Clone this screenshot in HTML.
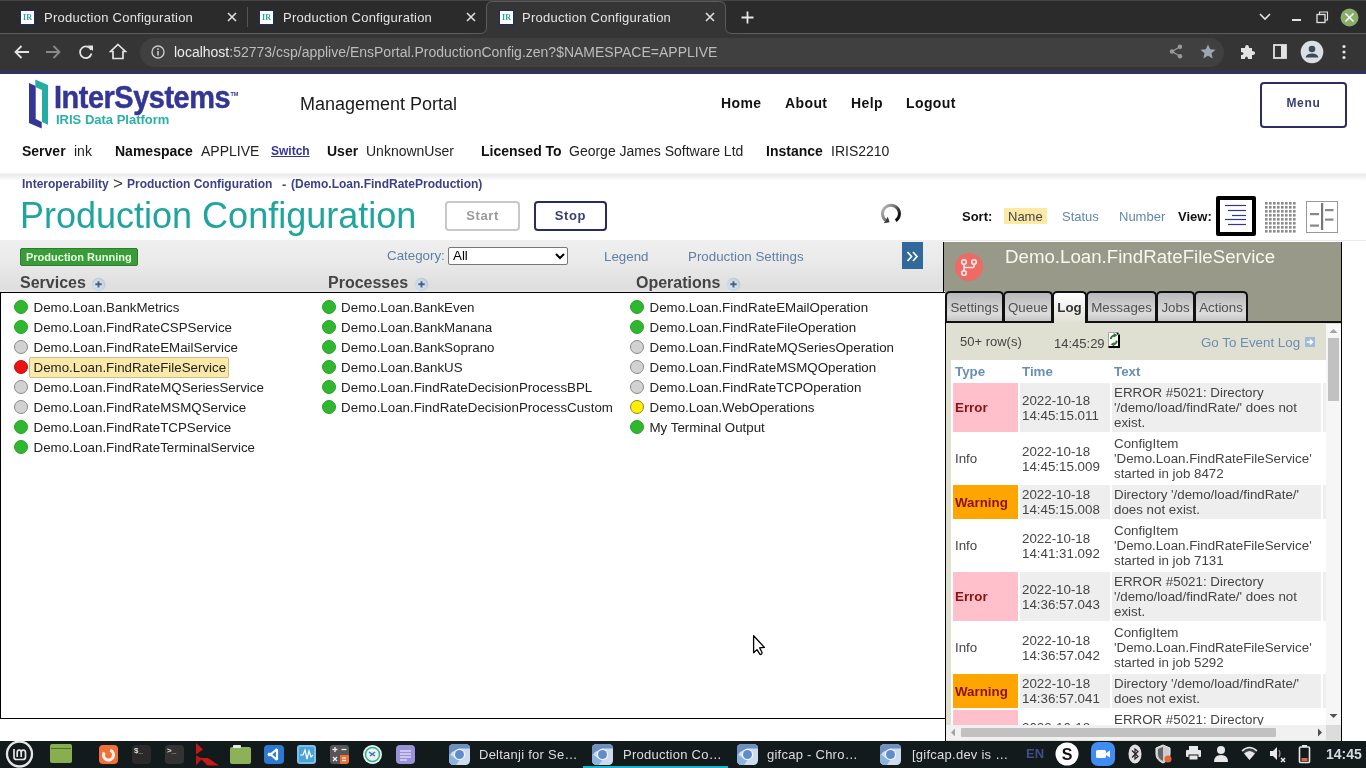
<!DOCTYPE html>
<html><head><meta charset="utf-8">
<style>
*{box-sizing:border-box}
html,body{margin:0;padding:0;width:1366px;height:768px;overflow:hidden;background:#fff;font-family:"Liberation Sans",sans-serif}
#root{position:absolute;left:0;top:0;width:1366px;height:768px;overflow:hidden;background:#fff;will-change:transform}
.a{position:absolute;white-space:nowrap}
/* chrome */
#tabstrip{position:absolute;left:0;top:0;width:1366px;height:34px;background:#2b2b2b;border-top:1px solid #454545}
#toolbar{position:absolute;left:0;top:34px;width:1366px;height:37px;background:#353535}
#tbline{position:absolute;left:0;top:33px;width:1366px;height:1px;background:#5e5e5e}
#activetab{position:absolute;left:486px;top:1px;width:240px;height:34px;background:#353535;border:1px solid #5a5a5a;border-bottom:none;border-radius:8px 8px 0 0}
.tabtxt{position:absolute;color:#e4e4e4;font-size:13px;top:10px;letter-spacing:0.25px}
.fav{position:absolute;top:10px;width:15px;height:15px;background:#fff;border:1px solid #1f2a6a;font-size:8px;font-weight:bold;color:#2aa59c;text-align:center;line-height:13px;font-family:"Liberation Serif",serif}
#omni{position:absolute;left:140px;top:38px;width:1084px;height:29px;border-radius:15px;background:#404040}
#blueline{position:absolute;left:0;top:71px;width:1366px;height:3px;background:#30306a}
/* header */
.nav{position:absolute;top:95px;font-size:14px;font-weight:bold;color:#111;letter-spacing:0.4px}
.ib{position:absolute;top:143px;font-size:14px;color:#222}
.ib b{color:#111}
#hdrshadow{position:absolute;left:0;top:173px;width:1366px;height:8px;background:linear-gradient(#f4f4f4,#ebebeb 25%,#fafafa 80%,#fff)}
.crumb{position:absolute;top:177px;font-size:12px;font-weight:bold;color:#3b4288}
/* band */
#band{position:absolute;left:0;top:240px;width:944px;height:53px;background:linear-gradient(#efefef,#eaeaea 40%,#dedede 92%,#ececec)}
.hd{position:absolute;top:274px;font-size:16px;font-weight:bold;color:#444}
.plus{position:absolute;top:277px;width:14px;height:14px;border-radius:50%;background:radial-gradient(circle at 40% 35%,#f4f8fb,#b9cad8);color:#3c6a9a;font-size:12px;font-weight:bold;line-height:14px;text-align:center}
.lnk{position:absolute;font-size:13.33px;color:#5f80a2}
#diagram{position:absolute;left:0;top:292px;width:946px;height:427px;border:1px solid #000;border-right:none;background:#fff}
.it{position:absolute;font-size:13.33px;color:#222;height:20px;line-height:20px}
.dot{position:absolute;width:14px;height:14px;border-radius:50%}
.g{background:#2fb82f;border:1px solid #27a027}
.gr{background:#d2d2d2;border:1px solid #8a8a8a}
.r{background:#ee1111;border:1px solid #c01010}
.y{background:#ffef00;border:1px solid #8a8a30}
/* panel */
#panel{position:absolute;left:944px;top:242px;width:398px;height:49px;background:#989988;border-right:1px solid #000}
#panel2{position:absolute;left:945px;top:291px;width:397px;height:31px;background:#989988;border-right:1px solid #000}
#bandedge{position:absolute;left:943px;top:242px;width:1px;height:51px;background:#000}
.tab{position:absolute;top:291px;height:30px;border:2px solid #111;border-bottom:none;border-radius:5px 5px 0 0;background:linear-gradient(#b9b9b9,#dcdcdc 75%,#c4c4c4);font-size:13.33px;color:#505050;text-align:center;line-height:29px}
#content{position:absolute;left:946px;top:322px;width:395px;height:419px;background:#e0e0d2;border-top:2px solid #111}
.lh{position:absolute;top:360px;font-size:13.33px;font-weight:bold;color:#6a9acb}
.cell{position:absolute;font-size:13px;line-height:15px;color:#444;padding:2px}
/* taskbar */
#taskbar{position:absolute;left:0;top:741px;width:1366px;height:27px;background:#131a1c}
.tk{position:absolute;top:744px;width:20px;height:20px;border-radius:4px}
.tt{position:absolute;top:747px;font-size:13px;color:#dedede;letter-spacing:0.25px}
</style></head><body><div id="root">

<!-- ============ CHROME ============ -->
<div id="tabstrip"></div>
<div id="tbline"></div>
<div id="toolbar"></div>
<svg class="a" style="left:0;top:0" width="1366" height="36"><path d="M470,33.5 H480 Q486.5,33.5 486.5,27 V7.5 Q486.5,1.5 492.5,1.5 H719.5 Q725.5,1.5 725.5,7.5 V27 Q725.5,33.5 732,33.5 H742 V36 H470 Z" fill="#353535"/><path d="M470,33.5 H480 Q486.5,33.5 486.5,27 V7.5 Q486.5,1.5 492.5,1.5 H719.5 Q725.5,1.5 725.5,7.5 V27 Q725.5,33.5 732,33.5 H742" fill="none" stroke="#5c5c5c" stroke-width="1"/><rect x="470" y="34" width="272" height="2" fill="#353535"/></svg>
<div class="fav" style="left:20px">IR</div>
<div class="tabtxt a" style="left:44px">Production Configuration</div>
<svg class="a" style="left:227px;top:12px" width="10" height="10"><path d="M1,1 L9,9 M9,1 L1,9" stroke="#e0e0e0" stroke-width="1.6"/></svg>
<div class="a" style="left:247px;top:7px;width:1px;height:20px;background:#555"></div>
<div class="fav" style="left:259px">IR</div>
<div class="tabtxt a" style="left:283px">Production Configuration</div>
<svg class="a" style="left:466px;top:12px" width="10" height="10"><path d="M1,1 L9,9 M9,1 L1,9" stroke="#e0e0e0" stroke-width="1.6"/></svg>
<div class="fav" style="left:499px">IR</div>
<div class="tabtxt a" style="left:522px">Production Configuration</div>
<svg class="a" style="left:705px;top:12px" width="10" height="10"><path d="M1,1 L9,9 M9,1 L1,9" stroke="#e0e0e0" stroke-width="1.6"/></svg>
<svg class="a" style="left:741px;top:11px" width="13" height="13"><path d="M6.5,0.5 V12.5 M0.5,6.5 H12.5" stroke="#e8e8e8" stroke-width="1.8"/></svg>

<div id="omni"></div>
<div class="a" style="left:174px;top:44px;font-size:14px;color:#bcbcbc"><span style="color:#ececec">localhost</span>:52773/csp/applive/EnsPortal.ProductionConfig.zen?$NAMESPACE=APPLIVE</div>
<div id="blueline"></div>
<!--CHROME-->
<svg class="a" style="left:13px;top:44px" width="17" height="16" viewBox="0 0 17 16"><path d="M16,8 H3 M8.5,2 L2.5,8 L8.5,14" fill="none" stroke="#e3e3e3" stroke-width="1.8"/></svg>
<svg class="a" style="left:45px;top:44px" width="17" height="16" viewBox="0 0 17 16"><path d="M1,8 H14 M8.5,2 L14.5,8 L8.5,14" fill="none" stroke="#8a8a8a" stroke-width="1.8"/></svg>
<svg class="a" style="left:78px;top:44px" width="16" height="16" viewBox="0 0 16 16"><path d="M13.2,6 A5.8,5.8 0 1 0 13.5,9.5" fill="none" stroke="#e3e3e3" stroke-width="1.8"/><polygon points="9.5,1.5 15,1.5 15,7" fill="#e3e3e3"/></svg>
<svg class="a" style="left:109px;top:43px" width="18" height="17" viewBox="0 0 18 17"><path d="M9,1.5 L16.5,8.5 H14 V15.5 H4 V8.5 H1.5 Z" fill="none" stroke="#e3e3e3" stroke-width="1.7" stroke-linejoin="miter"/></svg>
<svg class="a" style="left:151px;top:45px" width="14" height="14" viewBox="0 0 14 14"><circle cx="7" cy="7" r="6" fill="none" stroke="#c8c8c8" stroke-width="1.4"/><rect x="6.2" y="6" width="1.6" height="4.5" fill="#c8c8c8"/><rect x="6.2" y="3.3" width="1.6" height="1.6" fill="#c8c8c8"/></svg>
<svg class="a" style="left:1169px;top:44px" width="14" height="15" viewBox="0 0 14 15"><g fill="#9a9a9a"><circle cx="11" cy="2.8" r="2.2"/><circle cx="3" cy="7.5" r="2.2"/><circle cx="11" cy="12.2" r="2.2"/></g><path d="M11,2.8 L3,7.5 L11,12.2" fill="none" stroke="#9a9a9a" stroke-width="1.3"/></svg>
<svg class="a" style="left:1200px;top:44px" width="16" height="15" viewBox="0 0 16 15"><polygon points="8,0.5 10.2,5.3 15.5,5.7 11.5,9.2 12.7,14.5 8,11.7 3.3,14.5 4.5,9.2 0.5,5.7 5.8,5.3" fill="#9aa6b2"/></svg>
<svg class="a" style="left:1240px;top:44px" width="16" height="16" viewBox="0 0 16 16"><path d="M1,4 H5 Q5,1 7,1 Q9,1 9,4 H12 V7 Q15,7 15,9 Q15,11 12,11 V15 H8 Q8,12.5 6.5,12.5 Q5,12.5 5,15 H1 V11 Q3.5,11 3.5,9.5 Q3.5,8 1,8 Z" fill="#e3e3e3"/></svg>
<svg class="a" style="left:1273px;top:44px" width="14" height="15" viewBox="0 0 14 15"><rect x="1" y="1" width="12" height="13" fill="none" stroke="#e3e3e3" stroke-width="1.8"/><rect x="8" y="1" width="5" height="13" fill="#e3e3e3"/></svg>
<svg class="a" style="left:1300px;top:40px" width="24" height="24" viewBox="0 0 24 24"><circle cx="12" cy="12" r="11.3" fill="#d9dfe5"/><circle cx="12" cy="9" r="3.3" fill="#3c4a5a"/><path d="M5.5,17.5 Q6.5,13.5 12,13.5 Q17.5,13.5 18.5,17.5 Z" fill="#3c4a5a"/></svg>
<svg class="a" style="left:1341px;top:44px" width="6" height="16"><g fill="#e3e3e3"><circle cx="3" cy="2.5" r="1.6"/><circle cx="3" cy="8" r="1.6"/><circle cx="3" cy="13.5" r="1.6"/></g></svg>
<svg class="a" style="left:1258px;top:12px" width="14" height="10"><polyline points="2,2 7,7 12,2" fill="none" stroke="#e3e3e3" stroke-width="1.6"/></svg>
<div class="a" style="left:1292px;top:19px;width:9px;height:1.5px;background:#e3e3e3"></div>
<svg class="a" style="left:1316px;top:11px" width="13" height="13"><rect x="1" y="3.5" width="8" height="8" fill="none" stroke="#e3e3e3" stroke-width="1.3"/><path d="M3.5,3.5 V1 H11.5 V9 H9" fill="none" stroke="#e3e3e3" stroke-width="1.1"/></svg>
<svg class="a" style="left:1340px;top:8px" width="19" height="19"><circle cx="9.5" cy="9.5" r="9" fill="#8aad6a"/><path d="M5.5,5.5 L13.5,13.5 M13.5,5.5 L5.5,13.5" stroke="#fff" stroke-width="1.6"/></svg>
<!--/CHROME-->

<!-- ============ HEADER ============ -->
<!-- logo -->
<svg class="a" style="left:24px;top:76px" width="26" height="56" viewBox="0 0 26 56">
  <polygon points="5,7 11.7,10 11.7,43 17.7,46 17.7,52.5 5,47" fill="#333695"/>
  <polygon points="11.3,3.4 24,9 24,48.7 18,46 18,14 11.3,11" fill="#25ada4"/>
</svg>
<div class="a" style="left:54px;top:79px;font-size:31.5px;font-weight:bold;color:#333695;letter-spacing:-0.5px;transform:scaleX(0.918);transform-origin:0 0;-webkit-text-stroke:0.5px #333695">InterSystems</div>
<div class="a" style="left:230.5px;top:91px;font-size:5.5px;font-weight:bold;color:#333695">TM</div>
<div class="a" style="left:56px;top:112px;font-size:13px;font-weight:bold;color:#2ab0a6">IRIS Data Platform</div>

<div class="a" style="left:300px;top:94px;font-size:18px;color:#1a1a1a">Management Portal</div>
<div class="nav a" style="left:721px">Home</div>
<div class="nav a" style="left:785px">About</div>
<div class="nav a" style="left:851px">Help</div>
<div class="nav a" style="left:906px">Logout</div>
<div class="a" style="left:1260px;top:82px;width:87px;height:46px;border:2px solid #2a2e62;border-radius:4px;color:#3b4272;font-size:12px;font-weight:bold;text-align:center;line-height:38px;letter-spacing:0.7px">Menu</div>

<div class="ib a" style="left:22px"><b>Server</b></div>
<div class="ib a" style="left:74px">ink</div>
<div class="ib a" style="left:115px"><b>Namespace</b></div>
<div class="ib a" style="left:201px">APPLIVE</div>
<div class="a" style="left:271px;top:144px;font-size:12px;font-weight:bold;color:#333695;text-decoration:underline">Switch</div>
<div class="ib a" style="left:327px"><b>User</b></div>
<div class="ib a" style="left:366px">UnknownUser</div>
<div class="ib a" style="left:481px"><b>Licensed To</b></div>
<div class="ib a" style="left:569px">George James Software Ltd</div>
<div class="ib a" style="left:766px"><b>Instance</b></div>
<div class="ib a" style="left:831px">IRIS2210</div>

<div id="hdrshadow"></div>
<div class="crumb a" style="left:22px">Interoperability</div>
<div class="a" style="left:113px;top:174px;font-size:17px;color:#333">&gt;</div>
<div class="crumb a" style="left:127px">Production Configuration</div>
<div class="crumb a" style="left:282px;font-size:13px">-</div><div class="crumb a" style="left:291px">(Demo.Loan.FindRateProduction)</div>

<div class="a" style="left:20px;top:195px;font-size:36px;color:#1fa59e">Production Configuration</div>
<div class="a" style="left:445px;top:201px;width:75px;height:30px;border:2px solid #c8c8c8;border-radius:4px;color:#9a9a9a;font-size:13px;font-weight:bold;text-align:center;line-height:26px;letter-spacing:0.6px">Start</div>
<div class="a" style="left:534px;top:201px;width:73px;height:30px;border:2px solid #282c5e;border-radius:4px;color:#3b4070;font-size:13px;font-weight:bold;text-align:center;line-height:26px;letter-spacing:0.6px">Stop</div>

<!-- spinner -->
<svg class="a" style="left:876px;top:200px" width="30" height="28" viewBox="0 0 30 28">
  <defs><linearGradient id="sg" x1="0" y1="0" x2="1" y2="0.6"><stop offset="0" stop-color="#c4c4c4"/><stop offset="0.55" stop-color="#777"/><stop offset="1" stop-color="#0e0e0e"/></linearGradient></defs>
  <path d="M19.7,20.7 A8.5,8.5 0 1 0 9.6,20.3" fill="none" stroke="url(#sg)" stroke-width="3"/>
  <polygon points="7.8,23.3 11.8,16.8 13.6,22.3" fill="#3a3a3a"/>
</svg>
<div class="a" style="left:962px;top:209px;font-size:13px;font-weight:bold;color:#111">Sort:</div>
<div class="a" style="left:1004px;top:208px;width:43px;height:16px;background:#fde9a6"></div>
<div class="a" style="left:1008px;top:209px;font-size:13px;color:#444">Name</div>
<div class="a" style="left:1062px;top:209px;font-size:13px;color:#6288ad">Status</div>
<div class="a" style="left:1119px;top:209px;font-size:13px;color:#6288ad">Number</div>
<div class="a" style="left:1178px;top:209px;font-size:13px;font-weight:bold;color:#111">View:</div>
<!-- view icons -->
<div class="a" style="left:1216px;top:196px;width:40px;height:40px;border:4px solid #000;border-radius:2px;background:#fff"></div>
<svg class="a" style="left:1216px;top:196px" width="40" height="40">
  <g stroke="#333695" stroke-width="1.2">
  <line x1="9" y1="9.5" x2="30" y2="9.5"/><line x1="12" y1="14.5" x2="30" y2="14.5"/><line x1="16" y1="19.5" x2="30" y2="19.5"/><line x1="9" y1="23.5" x2="30" y2="23.5"/><line x1="12" y1="28.5" x2="30" y2="28.5"/>
  </g>
</svg>
<svg class="a" style="left:1265px;top:202px" width="31" height="31" id="dotgrid"><rect x="0.0" y="0.0" width="2.6" height="2.6" fill="#8a8a8a"/><rect x="4.0" y="0.0" width="2.6" height="2.6" fill="#8a8a8a"/><rect x="8.0" y="0.0" width="2.6" height="2.6" fill="#8a8a8a"/><rect x="12.0" y="0.0" width="2.6" height="2.6" fill="#8a8a8a"/><rect x="16.0" y="0.0" width="2.6" height="2.6" fill="#8a8a8a"/><rect x="20.0" y="0.0" width="2.6" height="2.6" fill="#8a8a8a"/><rect x="24.0" y="0.0" width="2.6" height="2.6" fill="#8a8a8a"/><rect x="28.0" y="0.0" width="2.6" height="2.6" fill="#8a8a8a"/><rect x="0.0" y="4.0" width="2.6" height="2.6" fill="#8a8a8a"/><rect x="4.0" y="4.0" width="2.6" height="2.6" fill="#8a8a8a"/><rect x="8.0" y="4.0" width="2.6" height="2.6" fill="#8a8a8a"/><rect x="12.0" y="4.0" width="2.6" height="2.6" fill="#8a8a8a"/><rect x="16.0" y="4.0" width="2.6" height="2.6" fill="#8a8a8a"/><rect x="20.0" y="4.0" width="2.6" height="2.6" fill="#8a8a8a"/><rect x="24.0" y="4.0" width="2.6" height="2.6" fill="#8a8a8a"/><rect x="28.0" y="4.0" width="2.6" height="2.6" fill="#8a8a8a"/><rect x="0.0" y="8.0" width="2.6" height="2.6" fill="#8a8a8a"/><rect x="4.0" y="8.0" width="2.6" height="2.6" fill="#8a8a8a"/><rect x="8.0" y="8.0" width="2.6" height="2.6" fill="#8a8a8a"/><rect x="12.0" y="8.0" width="2.6" height="2.6" fill="#8a8a8a"/><rect x="16.0" y="8.0" width="2.6" height="2.6" fill="#8a8a8a"/><rect x="20.0" y="8.0" width="2.6" height="2.6" fill="#8a8a8a"/><rect x="24.0" y="8.0" width="2.6" height="2.6" fill="#8a8a8a"/><rect x="28.0" y="8.0" width="2.6" height="2.6" fill="#8a8a8a"/><rect x="0.0" y="12.0" width="2.6" height="2.6" fill="#8a8a8a"/><rect x="4.0" y="12.0" width="2.6" height="2.6" fill="#8a8a8a"/><rect x="8.0" y="12.0" width="2.6" height="2.6" fill="#8a8a8a"/><rect x="12.0" y="12.0" width="2.6" height="2.6" fill="#8a8a8a"/><rect x="16.0" y="12.0" width="2.6" height="2.6" fill="#8a8a8a"/><rect x="20.0" y="12.0" width="2.6" height="2.6" fill="#8a8a8a"/><rect x="24.0" y="12.0" width="2.6" height="2.6" fill="#8a8a8a"/><rect x="28.0" y="12.0" width="2.6" height="2.6" fill="#8a8a8a"/><rect x="0.0" y="16.0" width="2.6" height="2.6" fill="#8a8a8a"/><rect x="4.0" y="16.0" width="2.6" height="2.6" fill="#8a8a8a"/><rect x="8.0" y="16.0" width="2.6" height="2.6" fill="#8a8a8a"/><rect x="12.0" y="16.0" width="2.6" height="2.6" fill="#8a8a8a"/><rect x="16.0" y="16.0" width="2.6" height="2.6" fill="#8a8a8a"/><rect x="20.0" y="16.0" width="2.6" height="2.6" fill="#8a8a8a"/><rect x="24.0" y="16.0" width="2.6" height="2.6" fill="#8a8a8a"/><rect x="28.0" y="16.0" width="2.6" height="2.6" fill="#8a8a8a"/><rect x="0.0" y="20.0" width="2.6" height="2.6" fill="#8a8a8a"/><rect x="4.0" y="20.0" width="2.6" height="2.6" fill="#8a8a8a"/><rect x="8.0" y="20.0" width="2.6" height="2.6" fill="#8a8a8a"/><rect x="12.0" y="20.0" width="2.6" height="2.6" fill="#8a8a8a"/><rect x="16.0" y="20.0" width="2.6" height="2.6" fill="#8a8a8a"/><rect x="20.0" y="20.0" width="2.6" height="2.6" fill="#8a8a8a"/><rect x="24.0" y="20.0" width="2.6" height="2.6" fill="#8a8a8a"/><rect x="28.0" y="20.0" width="2.6" height="2.6" fill="#8a8a8a"/><rect x="0.0" y="24.0" width="2.6" height="2.6" fill="#8a8a8a"/><rect x="4.0" y="24.0" width="2.6" height="2.6" fill="#8a8a8a"/><rect x="8.0" y="24.0" width="2.6" height="2.6" fill="#8a8a8a"/><rect x="12.0" y="24.0" width="2.6" height="2.6" fill="#8a8a8a"/><rect x="16.0" y="24.0" width="2.6" height="2.6" fill="#8a8a8a"/><rect x="20.0" y="24.0" width="2.6" height="2.6" fill="#8a8a8a"/><rect x="24.0" y="24.0" width="2.6" height="2.6" fill="#8a8a8a"/><rect x="28.0" y="24.0" width="2.6" height="2.6" fill="#8a8a8a"/><rect x="0.0" y="28.0" width="2.6" height="2.6" fill="#8a8a8a"/><rect x="4.0" y="28.0" width="2.6" height="2.6" fill="#8a8a8a"/><rect x="8.0" y="28.0" width="2.6" height="2.6" fill="#8a8a8a"/><rect x="12.0" y="28.0" width="2.6" height="2.6" fill="#8a8a8a"/><rect x="16.0" y="28.0" width="2.6" height="2.6" fill="#8a8a8a"/><rect x="20.0" y="28.0" width="2.6" height="2.6" fill="#8a8a8a"/><rect x="24.0" y="28.0" width="2.6" height="2.6" fill="#8a8a8a"/><rect x="28.0" y="28.0" width="2.6" height="2.6" fill="#8a8a8a"/></svg>
<div class="a" style="left:1306px;top:201px;width:32px;height:32px;border:1px solid #999;background:#fff"></div>
<svg class="a" style="left:1306px;top:201px" width="32" height="32">
  <rect x="15" y="2" width="2.2" height="27" fill="#777"/>
  <rect x="4" y="12" width="9" height="2.2" fill="#888"/><rect x="4" y="23.5" width="9" height="2.2" fill="#888"/>
  <rect x="19" y="8" width="8.5" height="2.2" fill="#888"/><rect x="19" y="17.5" width="8.5" height="2.2" fill="#888"/>
</svg>

<!-- ============ BAND ============ -->
<div class="a" style="left:0;top:240px;width:1366px;height:1px;background:#eaeaea"></div>
<div id="band"></div>
<div class="a" style="left:20px;top:248px;width:118px;height:18px;background:#3a9b3a;border:1px solid #2c7c2c;border-radius:2px;color:#e6ffdc;font-size:11px;font-weight:bold;line-height:16px;padding-left:5px">Production Running</div>
<div class="lnk a" style="left:387px;top:248px">Category:</div>
<div class="a" style="left:448px;top:247px;width:120px;height:18px;background:#fff;border:1px solid #777;border-radius:2px;font-size:13.33px;color:#000;line-height:16px;padding-left:4px">All</div>
<svg class="a" style="left:554px;top:251px" width="12" height="10"><polyline points="2,3 6,7 10,3" fill="none" stroke="#000" stroke-width="2"/></svg>
<div class="lnk a" style="left:604px;top:249px">Legend</div>
<div class="lnk a" style="left:688px;top:249px">Production Settings</div>
<div class="a" style="left:902px;top:242px;width:21px;height:27px;background:#30699a"></div>
<svg class="a" style="left:902px;top:242px" width="21" height="27"><g fill="none" stroke="#fff" stroke-width="1.7"><polyline points="5.5,10 9.5,14.5 5.5,19"/><polyline points="11,10 15,14.5 11,19"/></g></svg>

<div class="hd a" style="left:20px">Services</div>
<svg class="a" style="left:91px;top:277px" width="15" height="15" viewBox="0 0 15 15"><defs><radialGradient id="pg92" cx="0.45" cy="0.55" r="0.6"><stop offset="0" stop-color="#ddeaf4"/><stop offset="0.7" stop-color="#c9d7e2"/><stop offset="1" stop-color="#aebdca"/></radialGradient></defs><circle cx="7.5" cy="7.5" r="6.8" fill="url(#pg92)"/><path d="M4.3,7.3 H10.7 M7.5,4.2 V10.4" stroke="#4a6280" stroke-width="1.9"/></svg>
<div class="hd a" style="left:328px">Processes</div>
<svg class="a" style="left:414px;top:277px" width="15" height="15" viewBox="0 0 15 15"><defs><radialGradient id="pg414" cx="0.45" cy="0.55" r="0.6"><stop offset="0" stop-color="#ddeaf4"/><stop offset="0.7" stop-color="#c9d7e2"/><stop offset="1" stop-color="#aebdca"/></radialGradient></defs><circle cx="7.5" cy="7.5" r="6.8" fill="url(#pg414)"/><path d="M4.3,7.3 H10.7 M7.5,4.2 V10.4" stroke="#4a6280" stroke-width="1.9"/></svg>
<div class="hd a" style="left:636px">Operations</div>
<svg class="a" style="left:726px;top:277px" width="15" height="15" viewBox="0 0 15 15"><defs><radialGradient id="pg726" cx="0.45" cy="0.55" r="0.6"><stop offset="0" stop-color="#ddeaf4"/><stop offset="0.7" stop-color="#c9d7e2"/><stop offset="1" stop-color="#aebdca"/></radialGradient></defs><circle cx="7.5" cy="7.5" r="6.8" fill="url(#pg726)"/><path d="M4.3,7.3 H10.7 M7.5,4.2 V10.4" stroke="#4a6280" stroke-width="1.9"/></svg>

<!-- ============ DIAGRAM ============ -->
<div id="diagram"></div>
<!--ITEMS-->
<div class="dot g" style="left:14px;top:300px"></div><div class="it a" style="left:33.5px;top:298px">Demo.Loan.BankMetrics</div>
<div class="dot g" style="left:14px;top:320px"></div><div class="it a" style="left:33.5px;top:318px">Demo.Loan.FindRateCSPService</div>
<div class="dot gr" style="left:14px;top:340px"></div><div class="it a" style="left:33.5px;top:338px">Demo.Loan.FindRateEMailService</div>
<div class="a" style="left:29px;top:357px;width:200px;height:21px;background:#fbe9a8;border:1px solid #c9bc92;border-radius:2px"></div>
<div class="dot r" style="left:14px;top:360px"></div><div class="it a" style="left:33.5px;top:358px">Demo.Loan.FindRateFileService</div>
<div class="dot gr" style="left:14px;top:380px"></div><div class="it a" style="left:33.5px;top:378px">Demo.Loan.FindRateMQSeriesService</div>
<div class="dot gr" style="left:14px;top:400px"></div><div class="it a" style="left:33.5px;top:398px">Demo.Loan.FindRateMSMQService</div>
<div class="dot g" style="left:14px;top:420px"></div><div class="it a" style="left:33.5px;top:418px">Demo.Loan.FindRateTCPService</div>
<div class="dot g" style="left:14px;top:440px"></div><div class="it a" style="left:33.5px;top:438px">Demo.Loan.FindRateTerminalService</div>
<div class="dot g" style="left:321.8px;top:300px"></div><div class="it a" style="left:341.1px;top:298px">Demo.Loan.BankEven</div>
<div class="dot g" style="left:321.8px;top:320px"></div><div class="it a" style="left:341.1px;top:318px">Demo.Loan.BankManana</div>
<div class="dot g" style="left:321.8px;top:340px"></div><div class="it a" style="left:341.1px;top:338px">Demo.Loan.BankSoprano</div>
<div class="dot g" style="left:321.8px;top:360px"></div><div class="it a" style="left:341.1px;top:358px">Demo.Loan.BankUS</div>
<div class="dot g" style="left:321.8px;top:380px"></div><div class="it a" style="left:341.1px;top:378px">Demo.Loan.FindRateDecisionProcessBPL</div>
<div class="dot g" style="left:321.8px;top:400px"></div><div class="it a" style="left:341.1px;top:398px">Demo.Loan.FindRateDecisionProcessCustom</div>
<div class="dot g" style="left:630px;top:300px"></div><div class="it a" style="left:649.5px;top:298px">Demo.Loan.FindRateEMailOperation</div>
<div class="dot g" style="left:630px;top:320px"></div><div class="it a" style="left:649.5px;top:318px">Demo.Loan.FindRateFileOperation</div>
<div class="dot gr" style="left:630px;top:340px"></div><div class="it a" style="left:649.5px;top:338px">Demo.Loan.FindRateMQSeriesOperation</div>
<div class="dot gr" style="left:630px;top:360px"></div><div class="it a" style="left:649.5px;top:358px">Demo.Loan.FindRateMSMQOperation</div>
<div class="dot gr" style="left:630px;top:380px"></div><div class="it a" style="left:649.5px;top:378px">Demo.Loan.FindRateTCPOperation</div>
<div class="dot y" style="left:630px;top:400px"></div><div class="it a" style="left:649.5px;top:398px">Demo.Loan.WebOperations</div>
<div class="dot g" style="left:630px;top:420px"></div><div class="it a" style="left:649.5px;top:418px">My Terminal Output</div>
<!--/ITEMS-->

<!-- cursor -->
<svg class="a" style="left:750px;top:632px;z-index:50" width="18" height="25" viewBox="0 0 18 25"><path d="M3.6,3.8 L3.6,20.8 L7,17.6 L9.8,22.2 Q10.8,23 11.8,21.6 Q12.2,20.8 11.8,20 L9.6,15.8 L14.4,15.4 Z" fill="#fff" stroke="#000" stroke-width="1.3" stroke-linejoin="round"/></svg>
<!-- ============ PANEL ============ -->
<div id="panel"></div><div id="panel2"></div><div id="bandedge"></div>
<!--PANEL-->
<div class="a" style="left:955px;top:253px;width:28px;height:28px;border-radius:50%;background:#ee6a64"></div>
<svg class="a" style="left:955px;top:253px" width="28" height="28" viewBox="0 0 28 28"><g fill="none" stroke="#fde8e8" stroke-width="1.6"><circle cx="9" cy="9" r="2.3"/><circle cx="19" cy="9" r="2.3"/><circle cx="9" cy="20" r="2.3"/><line x1="9" y1="11.3" x2="9" y2="17.7"/><path d="M19,11.3 V13.5 Q19,14.5 18,14.5 H9"/></g></svg>
<div class="a" style="left:1005px;top:246px;font-size:18.7px;color:#f8f8ee">Demo.Loan.FindRateFileService</div>
<div class="a" style="left:945px;top:321px;width:397px;height:420px;background:#e0e0d2;border-top:2px solid #111;border-left:1px solid #000;border-right:1px solid #000"></div>
<div class="tab a" style="left:945px;width:59px">Settings</div>
<div class="tab a" style="left:1003px;width:50px">Queue</div>
<div class="tab a" style="left:1052px;width:35px;height:32px;background:linear-gradient(#fdfdfd,#eeeee8 60%,#e0e0d2);font-weight:bold;color:#333;z-index:2">Log</div>
<div class="tab a" style="left:1086px;width:71px">Messages</div>
<div class="tab a" style="left:1156px;width:39px">Jobs</div>
<div class="tab a" style="left:1194px;width:54px">Actions</div>
<div class="a" style="left:960px;top:334px;font-size:13px;color:#444">50+ row(s)</div>
<div class="a" style="left:1054px;top:336px;font-size:13px;color:#444">14:45:29</div>
<svg class="a" style="left:1108px;top:332px" width="13" height="16" viewBox="0 0 13 16"><rect x="1" y="1" width="10" height="14" fill="#fff"/><path d="M0.5,15.5 V0.5 H9" fill="none" stroke="#a8a8a8" stroke-width="1"/><path d="M11,2.5 V15 H0.5" fill="none" stroke="#000" stroke-width="2"/><circle cx="9.6" cy="1.6" r="1.1" fill="#000"/><path d="M2.8,7 Q3,4 6.5,3.4" fill="none" stroke="#2d7a2d" stroke-width="1.8"/><polygon points="5.6,1 9.4,3.3 5.9,5.6" fill="#2d7a2d"/><path d="M8.8,8.6 Q8.6,11.6 5.4,12.3" fill="none" stroke="#2d7a2d" stroke-width="1.8"/><polygon points="6.4,10 2.6,12.2 6.2,14.6" fill="#2d7a2d"/></svg>
<div class="a" style="left:1201px;top:335px;font-size:13.33px;color:#6a8db2">Go To Event Log</div>
<svg class="a" style="left:1305px;top:337px" width="10" height="10" viewBox="0 0 10 10"><rect x="0" y="0" width="10" height="10" fill="#9dbcda"/><path d="M1.8,5 H6.8 M5,2.6 L7.4,5 L5,7.4" fill="none" stroke="#fff" stroke-width="1.5"/></svg>
<div class="a" style="left:951px;top:360px;width:375px;height:365px;background:#fff;overflow:hidden" id="tbl">
<div class="a" style="left:4px;top:4px;font-size:13.33px;font-weight:bold;color:#6a8fb4">Type</div>
<div class="a" style="left:71px;top:4px;font-size:13.33px;font-weight:bold;color:#6a8fb4">Time</div>
<div class="a" style="left:163px;top:4px;font-size:13.33px;font-weight:bold;color:#6a8fb4">Text</div>
<div class="a" style="left:2px;top:23.3px;width:65px;height:49px;background:#ffc0cb"><div class="a" style="left:2px;top:17.0px;font-size:13.33px;line-height:15px;font-weight:bold;color:#8b1010">Error</div></div>
<div class="a" style="left:69px;top:23.3px;width:90px;height:49px;background:#eeeeee"><div class="a" style="left:2px;top:9.5px;font-size:13.33px;line-height:15px;color:#444">2022-10-18<br>14:45:15.011</div></div>
<div class="a" style="left:161px;top:23.3px;width:209px;height:49px;background:#eeeeee"><div class="a" style="left:2px;top:2px;font-size:13.33px;line-height:15px;color:#444">ERROR #5021: Directory<br>'/demo/load/findRate/' does not<br>exist.</div></div>
<div class="a" style="left:372px;top:23.3px;width:4px;height:49px;background:#eeeeee"></div>
<div class="a" style="left:2px;top:74.3px;width:65px;height:49px;background:#fff"><div class="a" style="left:2px;top:17.0px;font-size:13.33px;line-height:15px;font-weight:normal;color:#444">Info</div></div>
<div class="a" style="left:69px;top:74.3px;width:90px;height:49px;background:#fff"><div class="a" style="left:2px;top:9.5px;font-size:13.33px;line-height:15px;color:#444">2022-10-18<br>14:45:15.009</div></div>
<div class="a" style="left:161px;top:74.3px;width:209px;height:49px;background:#fff"><div class="a" style="left:2px;top:2px;font-size:13.33px;line-height:15px;color:#444">ConfigItem<br>'Demo.Loan.FindRateFileService'<br>started in job 8472</div></div>
<div class="a" style="left:372px;top:74.3px;width:4px;height:49px;background:#fff"></div>
<div class="a" style="left:2px;top:125.3px;width:65px;height:34px;background:#ffa500"><div class="a" style="left:2px;top:9.5px;font-size:13.33px;line-height:15px;font-weight:bold;color:#8b1010">Warning</div></div>
<div class="a" style="left:69px;top:125.3px;width:90px;height:34px;background:#eeeeee"><div class="a" style="left:2px;top:2.0px;font-size:13.33px;line-height:15px;color:#444">2022-10-18<br>14:45:15.008</div></div>
<div class="a" style="left:161px;top:125.3px;width:209px;height:34px;background:#eeeeee"><div class="a" style="left:2px;top:2px;font-size:13.33px;line-height:15px;color:#444">Directory '/demo/load/findRate/'<br>does not exist.</div></div>
<div class="a" style="left:372px;top:125.3px;width:4px;height:34px;background:#eeeeee"></div>
<div class="a" style="left:2px;top:161.3px;width:65px;height:49px;background:#fff"><div class="a" style="left:2px;top:17.0px;font-size:13.33px;line-height:15px;font-weight:normal;color:#444">Info</div></div>
<div class="a" style="left:69px;top:161.3px;width:90px;height:49px;background:#fff"><div class="a" style="left:2px;top:9.5px;font-size:13.33px;line-height:15px;color:#444">2022-10-18<br>14:41:31.092</div></div>
<div class="a" style="left:161px;top:161.3px;width:209px;height:49px;background:#fff"><div class="a" style="left:2px;top:2px;font-size:13.33px;line-height:15px;color:#444">ConfigItem<br>'Demo.Loan.FindRateFileService'<br>started in job 7131</div></div>
<div class="a" style="left:372px;top:161.3px;width:4px;height:49px;background:#fff"></div>
<div class="a" style="left:2px;top:212.3px;width:65px;height:49px;background:#ffc0cb"><div class="a" style="left:2px;top:17.0px;font-size:13.33px;line-height:15px;font-weight:bold;color:#8b1010">Error</div></div>
<div class="a" style="left:69px;top:212.3px;width:90px;height:49px;background:#eeeeee"><div class="a" style="left:2px;top:9.5px;font-size:13.33px;line-height:15px;color:#444">2022-10-18<br>14:36:57.043</div></div>
<div class="a" style="left:161px;top:212.3px;width:209px;height:49px;background:#eeeeee"><div class="a" style="left:2px;top:2px;font-size:13.33px;line-height:15px;color:#444">ERROR #5021: Directory<br>'/demo/load/findRate/' does not<br>exist.</div></div>
<div class="a" style="left:372px;top:212.3px;width:4px;height:49px;background:#eeeeee"></div>
<div class="a" style="left:2px;top:263.3px;width:65px;height:49px;background:#fff"><div class="a" style="left:2px;top:17.0px;font-size:13.33px;line-height:15px;font-weight:normal;color:#444">Info</div></div>
<div class="a" style="left:69px;top:263.3px;width:90px;height:49px;background:#fff"><div class="a" style="left:2px;top:9.5px;font-size:13.33px;line-height:15px;color:#444">2022-10-18<br>14:36:57.042</div></div>
<div class="a" style="left:161px;top:263.3px;width:209px;height:49px;background:#fff"><div class="a" style="left:2px;top:2px;font-size:13.33px;line-height:15px;color:#444">ConfigItem<br>'Demo.Loan.FindRateFileService'<br>started in job 5292</div></div>
<div class="a" style="left:372px;top:263.3px;width:4px;height:49px;background:#fff"></div>
<div class="a" style="left:2px;top:314.3px;width:65px;height:34px;background:#ffa500"><div class="a" style="left:2px;top:9.5px;font-size:13.33px;line-height:15px;font-weight:bold;color:#8b1010">Warning</div></div>
<div class="a" style="left:69px;top:314.3px;width:90px;height:34px;background:#eeeeee"><div class="a" style="left:2px;top:2.0px;font-size:13.33px;line-height:15px;color:#444">2022-10-18<br>14:36:57.041</div></div>
<div class="a" style="left:161px;top:314.3px;width:209px;height:34px;background:#eeeeee"><div class="a" style="left:2px;top:2px;font-size:13.33px;line-height:15px;color:#444">Directory '/demo/load/findRate/'<br>does not exist.</div></div>
<div class="a" style="left:372px;top:314.3px;width:4px;height:34px;background:#eeeeee"></div>
<div class="a" style="left:2px;top:350.3px;width:65px;height:49px;background:#ffc0cb"><div class="a" style="left:2px;top:17.0px;font-size:13.33px;line-height:15px;font-weight:bold;color:#8b1010">Error</div></div>
<div class="a" style="left:69px;top:350.3px;width:90px;height:49px;background:#fff"><div class="a" style="left:2px;top:9.5px;font-size:13.33px;line-height:15px;color:#444">2022-10-18<br>14:36:57.040</div></div>
<div class="a" style="left:161px;top:350.3px;width:209px;height:49px;background:#fff"><div class="a" style="left:2px;top:2px;font-size:13.33px;line-height:15px;color:#444">ERROR #5021: Directory<br>'/demo/load/findRate/' does not<br>exist.</div></div>
<div class="a" style="left:372px;top:350.3px;width:4px;height:49px;background:#fff"></div>
</div>
<div class="a" style="left:1326px;top:324px;width:15px;height:401px;background:#f6f6f6"></div>
<div class="a" style="left:1328px;top:338px;width:11px;height:63px;background:#c1c1c1"></div>
<svg class="a" style="left:1328px;top:326px" width="11" height="10"><polygon points="1.5,7 5.5,3 9.5,7" fill="#a3a3a3"/></svg>
<svg class="a" style="left:1328px;top:711px" width="11" height="10"><polygon points="1.5,3 5.5,7 9.5,3" fill="#505050"/></svg>
<div class="a" style="left:946px;top:725px;width:380px;height:15px;background:#f1f1f1"></div>
<div class="a" style="left:961px;top:728px;width:315px;height:9px;background:#c1c1c1;border-radius:1px"></div>
<svg class="a" style="left:948px;top:727px" width="10" height="11"><polygon points="7,1.5 3,5.5 7,9.5" fill="#a3a3a3"/></svg>
<svg class="a" style="left:1315px;top:727px" width="10" height="11"><polygon points="3,1.5 7,5.5 3,9.5" fill="#505050"/></svg>
<div class="a" style="left:1326px;top:725px;width:15px;height:15px;background:#dcdcdc"></div>
<!--/PANEL-->

<!-- ============ TASKBAR ============ -->
<div id="taskbar"></div>
<!--TASK-->
<svg class="a" style="left:5px;top:741px" width="29" height="27" viewBox="0 0 29 27"><circle cx="14.5" cy="13" r="12.5" fill="none" stroke="#e6e6e6" stroke-width="2.3"/><path d="M9,8 V16 Q9,18.5 11.5,18.5 H18 Q20.5,18.5 20.5,16 V11.5 Q20.5,9 18.3,9 Q16.2,9 16.2,11.5 V16 M16.2,11.5 Q16.2,9 14.1,9 Q12.2,9 12.2,11.5 V16" fill="none" stroke="#e6e6e6" stroke-width="1.7"/></svg>
<div class="a" style="left:50px;top:744px;width:22px;height:19px;background:#88ae50;border-radius:2px"></div>
<div class="a" style="left:51px;top:747.5px;width:20px;height:1.5px;background:#4f6f2c"></div>
<div class="a" style="left:99px;top:745px;width:19px;height:19px;border-radius:4px;background:#ef7137"></div>
<svg class="a" style="left:99px;top:745px" width="19" height="19"><circle cx="9.5" cy="10" r="5" fill="none" stroke="#fbefe6" stroke-width="3.2" stroke-dasharray="24 8" transform="rotate(-70 9.5 10)"/><circle cx="10.2" cy="9.6" r="1.6" fill="#ef7137"/></svg>
<div class="a" style="left:132px;top:745px;width:19px;height:19px;border-radius:4px;background:#2a2a2a;color:#ddd;font-size:8px;font-weight:bold;padding:1px 2px;line-height:9px">$_</div>
<div class="a" style="left:165px;top:745px;width:19px;height:19px;border-radius:4px;background:#333;color:#ddd;font-size:8px;font-weight:bold;padding:1px 2px;line-height:9px">&gt;_</div>
<svg class="a" style="left:195px;top:742px" width="25" height="25" viewBox="0 0 25 25"><polygon points="1,1 8,7.5 1,12.5" fill="#c41a1a"/><polygon points="1,13.5 7.5,16.5 1,23.5" fill="#b81616"/><polygon points="5,16 13,16 24,23.5 12.5,23.5" fill="#c41a1a"/></svg>
<div class="a" style="left:230px;top:747px;width:21px;height:17px;border-radius:2px;background:#8cb159"></div><div class="a" style="left:233px;top:745px;width:8px;height:3px;border-radius:1px;background:#e8e8e8"></div>
<div class="a" style="left:264px;top:745px;width:20px;height:19px;border-radius:4px;background:#2b79d0"></div>
<svg class="a" style="left:264px;top:745px" width="20" height="19"><path d="M13,4 L13,15 M13,4 L6,10 L4,8.5 M13,15 L6,9 L4,10.5" fill="none" stroke="#fff" stroke-width="2.2"/></svg>
<div class="a" style="left:297px;top:745px;width:19px;height:19px;border-radius:3px;background:#4aa3d8;border:2px solid #7cc0ea"></div>
<svg class="a" style="left:297px;top:745px" width="19" height="19"><polyline points="3,10 6,10 8,5 10,14 12,6 14,12 16,10" fill="none" stroke="#fff" stroke-width="1.2"/></svg>
<div class="a" style="left:330px;top:745px;width:19px;height:19px;border-radius:3px;background:#555"></div><div class="a" style="left:340px;top:755px;width:9px;height:9px;background:#ef6e35;border-radius:0 0 3px 0"></div>
<svg class="a" style="left:330px;top:745px" width="19" height="19"><g stroke="#eee" stroke-width="1.3"><line x1="2.5" y1="4.5" x2="7.5" y2="4.5"/><line x1="5" y1="2" x2="5" y2="7"/><line x1="11.5" y1="4.5" x2="16.5" y2="4.5"/><line x1="3" y1="12" x2="7" y2="16"/><line x1="7" y1="12" x2="3" y2="16"/><line x1="12" y1="13" x2="16" y2="13"/><line x1="12" y1="15.5" x2="16" y2="15.5"/></g></svg>
<svg class="a" style="left:362px;top:744px" width="21" height="21"><circle cx="10.5" cy="10.5" r="9.5" fill="#f0f0f0"/><circle cx="10.5" cy="10.5" r="7" fill="none" stroke="#28b48c" stroke-width="1.5"/><path d="M7,8 L13,12 M13,8 L8,12" stroke="#2a7ac0" stroke-width="1.5"/></svg>
<div class="a" style="left:396px;top:745px;width:19px;height:19px;border-radius:4px;background:#9a92d8"></div>
<svg class="a" style="left:396px;top:745px" width="19" height="19"><g stroke="#e8e6f8" stroke-width="1.3"><line x1="4" y1="6" x2="15" y2="6"/><line x1="4" y1="9" x2="15" y2="9"/><line x1="4" y1="12" x2="15" y2="12"/><line x1="4" y1="15" x2="11" y2="15"/></g></svg>
<svg class="a" style="left:449px;top:744px" width="21" height="21"><defs><clipPath id="cc449"><rect x="0" y="0" width="21" height="21" rx="4.5"/></clipPath></defs><g clip-path="url(#cc449)"><rect x="0" y="0" width="21" height="21" fill="#cddbec"/><polygon points="0,0 21,0 21,4.5 10.5,4.5 3,8 0,12" fill="#6f8fc0"/><polygon points="0,10 6,14 10.5,16 7,21 0,21" fill="#8db2de"/></g><circle cx="10.5" cy="10.5" r="5.7" fill="#eef6fb"/><circle cx="10.5" cy="10.5" r="4.5" fill="#5f8dcc"/></svg>
<div class="tt a" style="left:479px">Deltanji for Se…</div>
<div class="a" style="left:583px;top:766px;width:145px;height:2px;background:#1ab4cc"></div>
<svg class="a" style="left:592px;top:744px" width="21" height="21"><defs><clipPath id="cc592"><rect x="0" y="0" width="21" height="21" rx="4.5"/></clipPath></defs><g clip-path="url(#cc592)"><rect x="0" y="0" width="21" height="21" fill="#cddbec"/><polygon points="0,0 21,0 21,4.5 10.5,4.5 3,8 0,12" fill="#6f8fc0"/><polygon points="0,10 6,14 10.5,16 7,21 0,21" fill="#8db2de"/></g><circle cx="10.5" cy="10.5" r="5.7" fill="#eef6fb"/><circle cx="10.5" cy="10.5" r="4.5" fill="#5f8dcc"/></svg>
<div class="tt a" style="left:623px">Production Co…</div>
<svg class="a" style="left:737px;top:744px" width="21" height="21"><defs><clipPath id="cc737"><rect x="0" y="0" width="21" height="21" rx="4.5"/></clipPath></defs><g clip-path="url(#cc737)"><rect x="0" y="0" width="21" height="21" fill="#cddbec"/><polygon points="0,0 21,0 21,4.5 10.5,4.5 3,8 0,12" fill="#6f8fc0"/><polygon points="0,10 6,14 10.5,16 7,21 0,21" fill="#8db2de"/></g><circle cx="10.5" cy="10.5" r="5.7" fill="#eef6fb"/><circle cx="10.5" cy="10.5" r="4.5" fill="#5f8dcc"/></svg>
<div class="tt a" style="left:767px">gifcap - Chro…</div>
<svg class="a" style="left:880px;top:744px" width="21" height="21"><defs><clipPath id="cc880"><rect x="0" y="0" width="21" height="21" rx="4.5"/></clipPath></defs><g clip-path="url(#cc880)"><rect x="0" y="0" width="21" height="21" fill="#cddbec"/><polygon points="0,0 21,0 21,4.5 10.5,4.5 3,8 0,12" fill="#6f8fc0"/><polygon points="0,10 6,14 10.5,16 7,21 0,21" fill="#8db2de"/></g><circle cx="10.5" cy="10.5" r="5.7" fill="#eef6fb"/><circle cx="10.5" cy="10.5" r="4.5" fill="#5f8dcc"/></svg>
<div class="tt a" style="left:912px">[gifcap.dev is …</div>
<div class="a" style="left:1026px;top:746px;font-size:13px;font-weight:bold;color:#3f4f8a">EN</div>
<svg class="a" style="left:1055px;top:742px" width="24" height="24"><circle cx="12" cy="12" r="11.5" fill="#fff"/><text x="12" y="17.5" font-family="Liberation Sans" font-weight="bold" font-size="16" text-anchor="middle" fill="#111">S</text></svg>
<div class="a" style="left:1091px;top:742px;width:24px;height:24px;border-radius:7px;background:#3f8cf2"></div>
<svg class="a" style="left:1091px;top:742px" width="24" height="24"><rect x="5" y="8" width="10" height="8" rx="1.5" fill="#fff"/><polygon points="15,11 19,8.5 19,15.5 15,13" fill="#fff"/></svg>
<svg class="a" style="left:1128px;top:744px" width="14" height="20"><ellipse cx="7" cy="10" rx="6.5" ry="9.5" fill="#e0e0e0"/><path d="M4,6.5 L10,12.5 L7,15 V5 L10,7.5 L4,13.5" fill="none" stroke="#222" stroke-width="1.2"/></svg>
<svg class="a" style="left:1155px;top:744px" width="18" height="20"><path d="M8,1 L15,4 V10 Q15,16 8,19 Q1,16 1,10 V4 Z" fill="#ccc" stroke="#eee" stroke-width="1"/><path d="M8,3 V17 Q3,15 3,10 V5 Z" fill="#666"/><circle cx="13" cy="15" r="3.5" fill="#e8643a"/></svg>
<svg class="a" style="left:1185px;top:745px" width="17" height="17"><rect x="4" y="1" width="9" height="4" fill="#e8e8e8"/><rect x="1" y="5" width="15" height="7" rx="1" fill="#e8e8e8"/><rect x="4" y="10" width="9" height="5" fill="#e8e8e8" stroke="#171b1f" stroke-width="1"/></svg>
<svg class="a" style="left:1214px;top:745px" width="14" height="18"><circle cx="7" cy="5" r="4" fill="#e8e8e8"/><path d="M0,17 Q0,10 7,10 Q14,10 14,17 Z" fill="#e8e8e8"/></svg>
<svg class="a" style="left:1241px;top:744px" width="17" height="18"><path d="M8.5,16 L1,7 Q8.5,0 16,7 Z" fill="#3a3f44"/><path d="M8.5,16 L3,9.5 Q8.5,4.5 14,9.5 Z" fill="#e8e8e8"/><path d="M1,7 Q8.5,0 16,7" fill="none" stroke="#e8e8e8" stroke-width="1.5"/></svg>
<svg class="a" style="left:1269px;top:745px" width="17" height="18"><polygon points="1,6 4,6 8,2 8,15 4,11 1,11" fill="#e8e8e8"/><path d="M10,5 Q12,8.5 10,12" fill="none" stroke="#888" stroke-width="1.2"/><path d="M12,13 L16,17 M16,13 L12,17" stroke="#e8e8e8" stroke-width="1.5"/></svg>
<svg class="a" style="left:1298px;top:744px" width="13" height="20"><rect x="4" y="1" width="5" height="2" fill="#e8e8e8"/><rect x="1.5" y="3" width="10" height="15.5" rx="1" fill="none" stroke="#e8e8e8" stroke-width="1.6"/><rect x="3.5" y="14" width="6" height="3" fill="#e8643a"/></svg>
<div class="a" style="left:1326px;top:746px;font-size:14px;font-weight:bold;color:#d4dbe2">14:45</div>
<!--/TASK-->
</div></body></html>
